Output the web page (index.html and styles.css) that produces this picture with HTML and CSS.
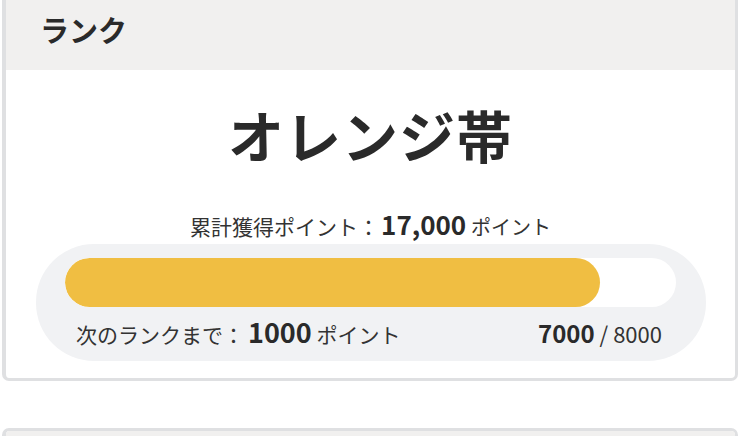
FILE: index.html
```html
<!DOCTYPE html>
<html lang="ja">
<head>
<meta charset="utf-8">
<link rel="stylesheet" href="styles.css">
</head>
<body>
<section class="card">
  <header class="card-head">ランク</header>
  <div class="card-body">
    <div class="rank-name">オレンジ帯</div>
    <div class="total">累計獲得ポイント：<b class="total-num">17,000</b> <span class="unit">ポイント</span></div>
    <div class="progress">
      <div class="track"><div class="fill" style="width:87.5%"></div></div>
      <div class="progress-info">
        <div class="next">次のランクまで：<b class="next-num">1000</b> <span class="unit">ポイント</span></div>
        <div class="ratio"><b class="ratio-cur">7000</b> / 8000</div>
      </div>
    </div>
  </div>
</section>
<section class="card card-next">
  <header class="card-head"></header>
</section>
</body>
</html>
```
FILE: styles.css
```css
html, body {
  margin: 0;
  padding: 0;
  background: #ffffff;
}
body {
  font-family: "Noto Sans CJK JP", "Noto Sans", sans-serif;
  color: #2b2b2b;
}
.card {
  margin: 0 2px;
  border: 3px solid #dfe0e2;
  border-top: none;
  border-left-width: 4px;
  border-radius: 0 0 7px 7px;
  background: #fff;
  overflow: hidden;
}
.card-head {
  height: 70px;
  background: #f1f0ef;
  padding-left: 34px;
  font-size: 29px;
  font-weight: 700;
  line-height: 58px;
  color: #2a2a2a;
}
.card-body {
  padding: 36px 0 17px;
}
.rank-name {
  text-align: center;
  font-size: 56px;
  font-weight: 700;
  line-height: 56px;
  color: #2a2a2a;
  letter-spacing: 1px;
}
.total {
  margin-top: 49px;
  text-align: center;
  font-size: 21px;
  line-height: 26px;
  color: #333;
}
.total-num {
  margin-left: 2px;
  font-size: 26px;
  font-weight: 700;
  color: #2a2a2a;
}
.unit {
  font-size: 20px;
}
.progress {
  margin: 4px 29px 0 30px;
  background: #f1f2f4;
  border-radius: 58px;
  padding: 14px 30px 9px 29px;
}
.track {
  height: 49px;
  background: #fff;
  border-radius: 25px;
  overflow: hidden;
}
.fill {
  height: 100%;
  background: #f0be42;
  border-radius: 25px;
}
.progress-info {
  display: flex;
  justify-content: space-between;
  align-items: baseline;
  padding: 7px 14px 0 11px;
  line-height: 36px;
}
.next {
  font-size: 21px;
  color: #333;
}
.next-num {
  margin-left: 4px;
  font-size: 27px;
  font-weight: 700;
  color: #2a2a2a;
}
.next .unit {
  font-size: 21px;
}
.ratio {
  font-size: 22px;
  color: #333;
}
.ratio-cur {
  font-size: 24px;
  font-weight: 700;
  color: #2a2a2a;
}
.card-next {
  margin-top: 47px;
  border-top: 3px solid #dfe0e2;
  border-radius: 7px 7px 0 0;
}
```
